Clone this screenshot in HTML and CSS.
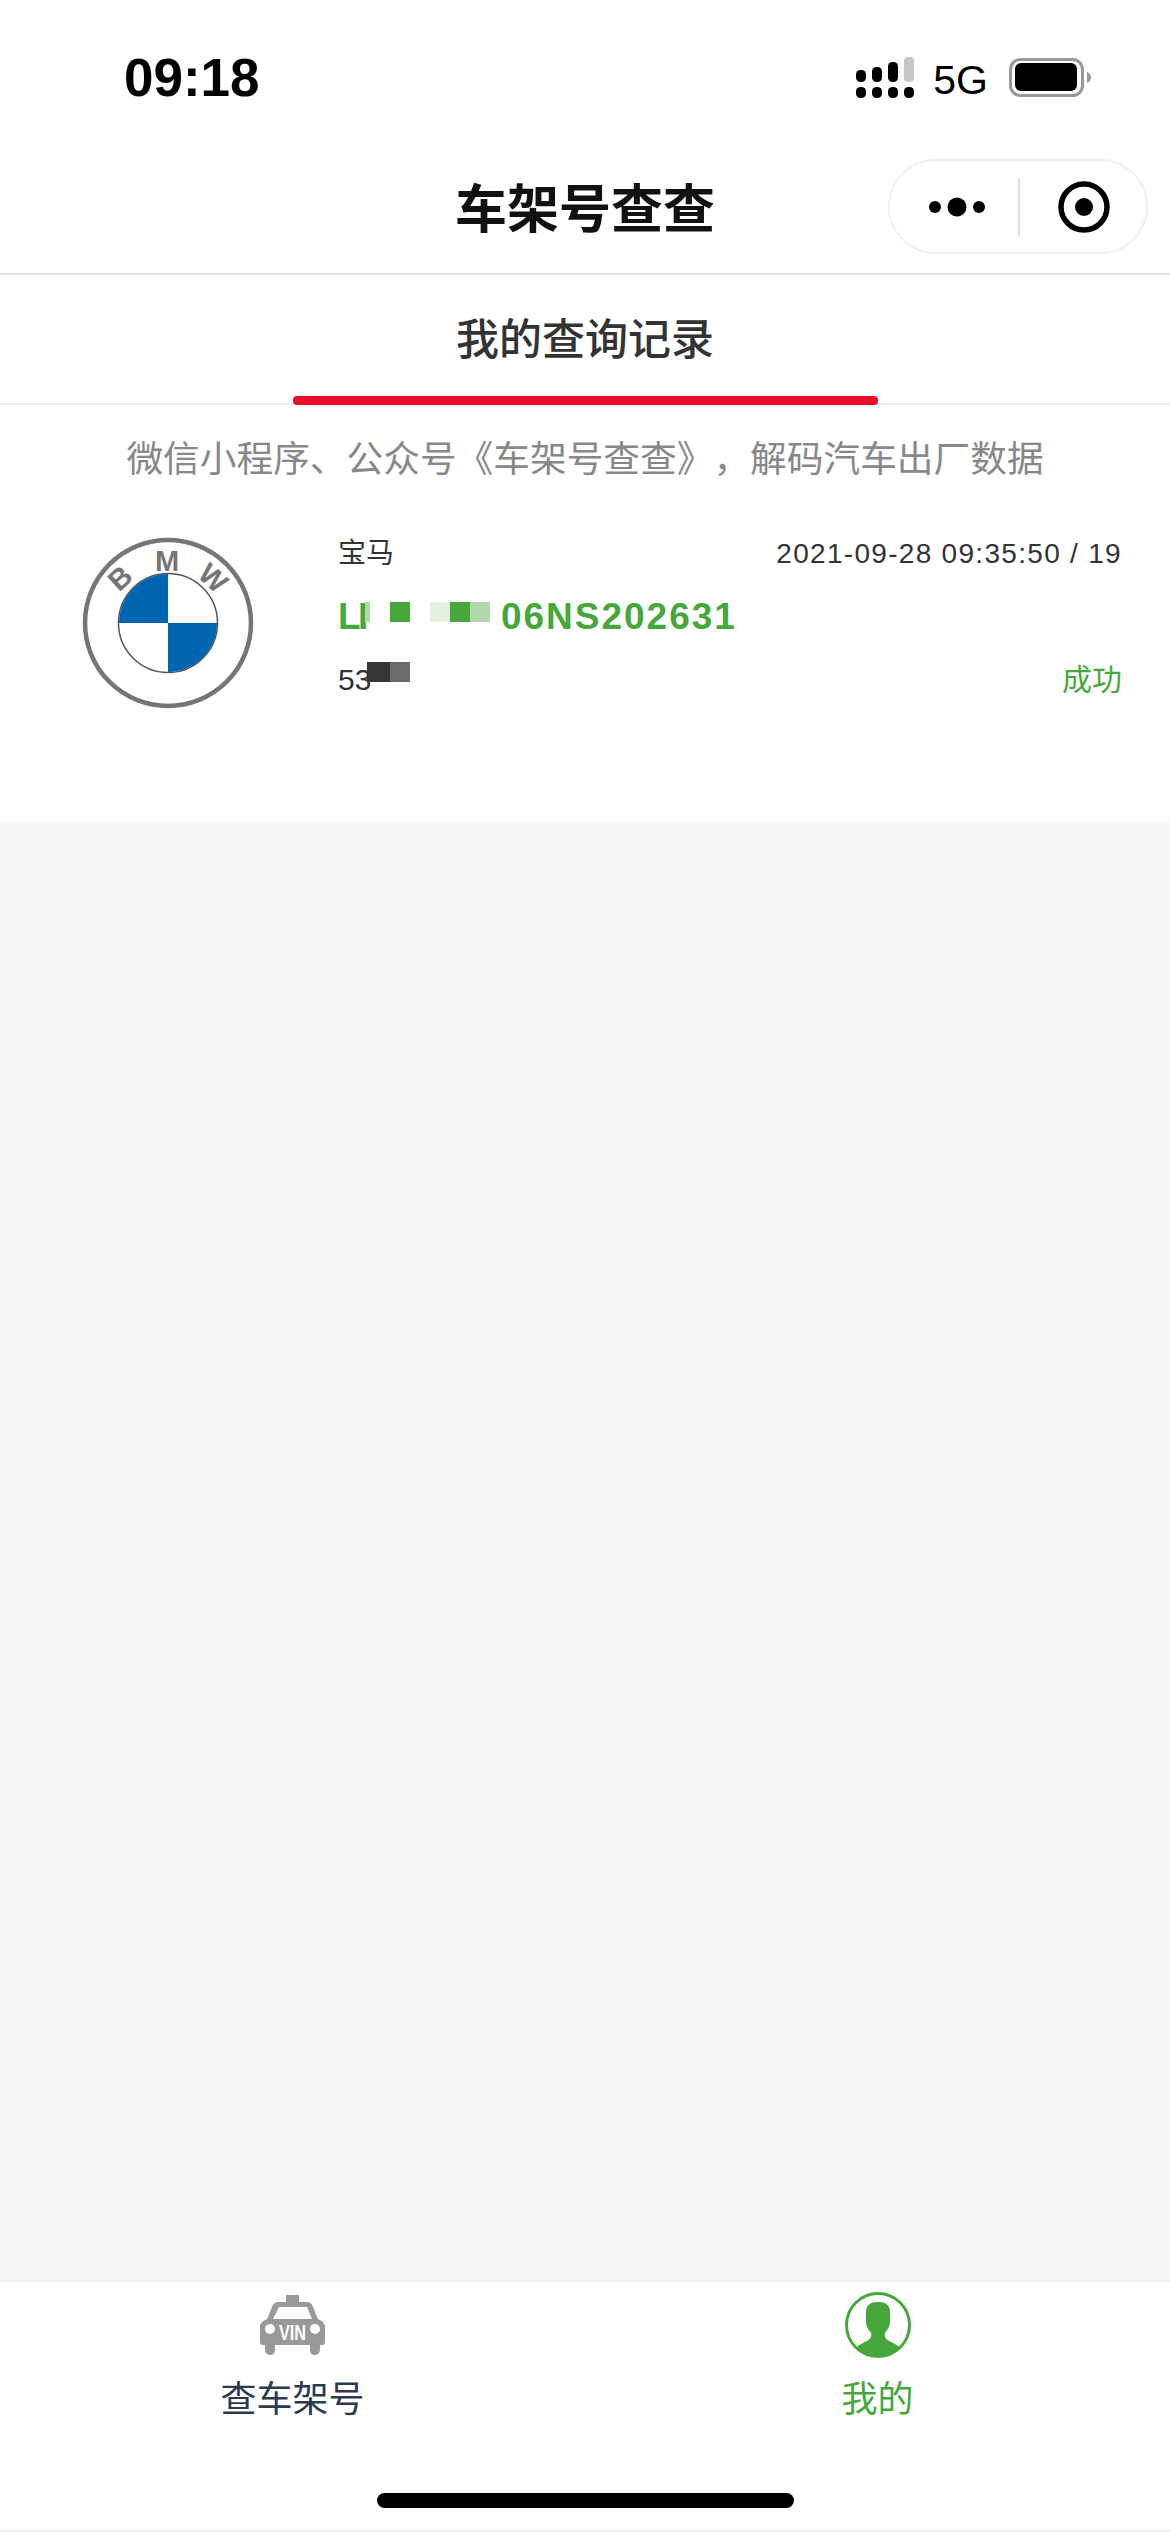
FILE: index.html
```html
<!DOCTYPE html>
<html lang="zh-CN">
<head>
    <meta charset="UTF-8">
    <meta name="viewport" content="width=device-width, initial-scale=1.0">
    <title>车架号查查</title>
    <link rel="stylesheet" href="styles.css">
</head>
<body>

    <div class="statusbar">
        <div class="clock">09:18</div>
        <div class="status-right">
            <svg class="signal" width="58" height="42" viewBox="0 0 58 42">
                <rect x="0" y="13" width="10" height="12" rx="4.5"/>
                <rect x="16" y="10" width="10" height="15" rx="4.5"/>
                <rect x="32" y="5" width="10" height="20" rx="4.5"/>
                <rect x="48" y="0" width="10" height="25" rx="4" fill="#c8c8c8"/>
                <rect x="0" y="30" width="10" height="11" rx="4.5"/>
                <rect x="16" y="30" width="10" height="11" rx="4.5"/>
                <rect x="32" y="30" width="10" height="11" rx="4.5"/>
                <rect x="48" y="30" width="10" height="11" rx="4.5"/>
            </svg>
            <span class="network">5G</span>
            <svg class="battery" width="82" height="40" viewBox="0 0 82 40">
                <rect x="1.500" y="1.500" width="72" height="36" rx="10" fill="none" stroke="#999" stroke-width="3"/>
                <rect x="6" y="5" width="62" height="28" rx="6"/>
                <path d="M78 14 C81 15 82 17 82 19.500 C82 22 81 24 78 25 Z" fill="#999"/>
            </svg>
        </div>
    </div>

    <header class="navbar">
        <h1>车架号查查</h1>
        <div class="capsule">
            <svg width="58" height="20" viewBox="0 0 58 20">
                <circle cx="6" cy="10" r="6"/>
                <circle cx="28" cy="10" r="9.500"/>
                <circle cx="50" cy="10" r="6"/>
            </svg>
            <span class="capsule-line"></span>
            <svg width="52" height="52" viewBox="0 0 52 52">
                <circle cx="26" cy="26" r="23" fill="none" stroke="#000" stroke-width="5.500"/>
                <circle cx="26" cy="26" r="9"/>
            </svg>
        </div>
    </header>

    <nav class="tabs">
        <div class="tab">
            <span>我的查询记录</span>
            <i class="tab-bar"></i>
        </div>
    </nav>

    <p class="notice">微信小程序、公众号《车架号查查》，解码汽车出厂数据</p>

    <section class="records">
        <article class="record">
            <svg class="brand" width="172" height="172" viewBox="0 0 172 172">
                <circle cx="86" cy="86" r="83" fill="#fff" stroke="#757575" stroke-width="4.500"/>
                <circle cx="86" cy="86" r="49.500" fill="#fff" stroke="#555" stroke-width="1.500"/>
                <path d="M86 37 A49 49 0 0 0 37 86 H86 Z" fill="#0066b1"/>
                <path d="M86 135 A49 49 0 0 0 135 86 H86 Z" fill="#0066b1"/>
                <g class="brand-letters">
                    <text transform="translate(44.700 48.400) rotate(-42)">B</text>
                    <text transform="translate(85 33.500)">M</text>
                    <text transform="translate(124.300 48.400) rotate(42)">W</text>
                </g>
            </svg>
            <div class="record-body">
                <div class="record-row">
                    <span class="brand-name">宝马</span>
                    <span class="record-time">2021-09-28 09:35:50 / 19</span>
                </div>
                <div class="vin">
                    <span class="vin-head">LI</span><span class="vin-tail">06NS202631</span>
                    <i class="blot blot-a"></i>
                    <i class="blot blot-b"></i>
                    <i class="blot blot-c"></i>
                    <i class="blot blot-d"></i>
                    <i class="blot blot-e"></i>
                </div>
                <div class="record-row record-last">
                    <span class="engine">53<i class="blot blot-f"></i><i class="blot blot-g"></i></span>
                    <span class="result">成功</span>
                </div>
            </div>
        </article>
    </section>

    <main class="blank"></main>

    <footer class="tabbar">
        <div class="tabbar-item">
            <svg class="tab-icon" width="65" height="60" viewBox="0 0 65 60">
                <path fill="#999" fill-rule="evenodd" d="M26 0 H39 V7 H46 C50 7 52 9 53 12 L58 24 C62 26 65 28 65 32 V47 C65 49 64 50 62 50 H60 V55 C60 58 57 60 55 60 C52 60 50 58 50 55 V50 H15 V55 C15 58 13 60 10 60 C8 60 5 58 5 55 V50 H3 C1 50 0 49 0 47 V32 C0 28 3 26 7 24 L12 12 C13 9 15 7 19 7 H26 Z M19 12 L13 24 H52 L47 12 Z"/>
                <circle cx="10" cy="34" r="5" fill="#fff"/>
                <circle cx="55" cy="34" r="5" fill="#fff"/>
                <text class="vin-badge" x="19" y="45" textLength="27" lengthAdjust="spacingAndGlyphs">VIN</text>
            </svg>
            <span class="tabbar-label">查车架号</span>
        </div>
        <div class="tabbar-item active">
            <svg class="tab-icon" width="66" height="66" viewBox="0 0 66 66">
                <circle cx="33" cy="33" r="31.500" fill="#fff" stroke="#46a83a" stroke-width="3"/>
                <path fill="#46a83a" d="M33 10 C41 10 45 13 45 20 V30 C45 35 42 38 40 41 C39 45 41 47 44 49 C48 51 51 52 54 55 C48 61 41 64 33 64 C25 64 18 61 12 55 C15 52 18 51 22 49 C25 47 27 45 26 41 C24 38 21 35 21 30 V20 C21 13 25 10 33 10 Z"/>
            </svg>
            <span class="tabbar-label">我的</span>
        </div>
        <i class="home-bar"></i>
    </footer>

</body>
</html>
```

FILE: styles.css
```css
* {
    box-sizing: border-box;
}

html, body {
    margin: 0;
    padding: 0;
}

body {
    width: 1170px;
    height: 2532px;
    display: flex;
    flex-direction: column;
    background-color: #fff;
    color: #333;
    font-family: "Liberation Sans", "Noto Sans CJK SC", sans-serif;
    text-spacing-trim: space-all;
}

.statusbar {
    height: 153px;
    flex: none;
    display: flex;
    justify-content: space-between;
    padding: 48px 79px 0 124px;
}

.clock {
    font-size: 53px;
    line-height: 60px;
    font-weight: bold;
    color: #000;
}

.status-right {
    height: 44px;
    margin-top: 9px;
    display: flex;
    align-items: flex-start;
}

.network {
    margin-left: 19px;
    font-size: 41px;
    line-height: 46px;
    color: #000;
}

.battery {
    margin-left: 21px;
    margin-top: 1px;
}

.navbar {
    height: 122px;
    flex: none;
    position: relative;
    border-bottom: 2px solid #e2e2e2;
    text-align: center;
}

.navbar h1 {
    margin: 0;
    padding-top: 26px;
    font-size: 52px;
    line-height: 62px;
    font-weight: bold;
    color: #111;
}

.capsule {
    position: absolute;
    top: 6px;
    left: 888px;
    width: 260px;
    height: 95px;
    display: flex;
    align-items: center;
    border: 2px solid #f0f0f0;
    border-radius: 48px;
    padding-left: 39px;
}

.capsule-line {
    width: 2px;
    height: 58px;
    margin-left: 31px;
    margin-right: 38px;
    background-color: #ddd;
}

.tabs {
    height: 130px;
    flex: none;
    display: flex;
    justify-content: center;
    border-bottom: 2px solid #eee;
}

.tab {
    width: 585px;
    position: relative;
    text-align: center;
    font-size: 43px;
    line-height: 50px;
    font-weight: 500;
    color: #333;
    padding-top: 40px;
}

.tab-bar {
    position: absolute;
    left: 0;
    right: 0;
    bottom: -2px;
    height: 9px;
    border-radius: 4px;
    background-color: #e90f2b;
}

.notice {
    margin: 0;
    height: 132px;
    flex: none;
    padding-top: 33px;
    text-align: center;
    font-size: 36.700px;
    line-height: 44px;
    color: #888;
}

.records {
    flex: none;
}

.record {
    height: 285px;
    display: flex;
    padding: 0 48px 0 82px;
}

.brand {
    flex: none;
}

.brand-letters {
    font-size: 29px;
    font-weight: bold;
    fill: #757575;
    text-anchor: middle;
}

.record-body {
    flex: 1;
    margin-left: 84px;
}

.record-row {
    display: flex;
    justify-content: space-between;
    align-items: center;
    font-size: 28px;
    line-height: 34px;
}

.record-time {
    letter-spacing: 1.300px;
}

.vin {
    position: relative;
    height: 40px;
    margin-top: 26px;
    font-size: 37px;
    line-height: 40px;
    font-weight: bold;
    color: #46a83a;
    letter-spacing: 2px;
}

.vin-head {
    letter-spacing: -2.500px;
}

.vin-tail {
    margin-left: 135px;
}

.blot {
    position: absolute;
    display: block;
    width: 20px;
    height: 20px;
}

.blot-a {
    left: 27px;
    top: 5px;
    width: 5px;
    background-color: #b2d9ac;
}

.blot-b {
    left: 52px;
    top: 5px;
    background-color: #46a83a;
}

.blot-c {
    left: 92px;
    top: 5px;
    background-color: #e2f1e0;
}

.blot-d {
    left: 112px;
    top: 5px;
    background-color: #46a83a;
}

.blot-e {
    left: 132px;
    top: 5px;
    background-color: #b2d9ac;
}

.record-last {
    margin-top: 26px;
    font-size: 30px;
}

.engine {
    position: relative;
}

.blot-f {
    left: 29px;
    top: -1px;
    width: 23px;
    background-color: #353535;
}

.blot-g {
    left: 52px;
    top: -1px;
    background-color: #6c6c6c;
}

.result {
    color: #46a83a;
}

.blank {
    flex: 1;
    background-color: #f8f8f8;
}

.tabbar {
    height: 252px;
    flex: none;
    position: relative;
    display: flex;
    border-top: 2px solid #eee;
    border-bottom: 2px solid #eee;
}

.tabbar-item {
    flex: 1;
    display: flex;
    flex-direction: column;
    align-items: center;
    padding-top: 10px;
}

.tab-icon {
    height: 66px;
}

.tabbar-label {
    margin-top: 20px;
    font-size: 36px;
    line-height: 44px;
    color: #2c3a4d;
}

.active .tabbar-label {
    color: #46a83a;
}

.vin-badge {
    font-size: 22px;
    font-weight: bold;
    fill: #fff;
}

.home-bar {
    position: absolute;
    left: 377px;
    top: 211px;
    width: 417px;
    height: 15px;
    border-radius: 8px;
    background-color: #000;
}
```
